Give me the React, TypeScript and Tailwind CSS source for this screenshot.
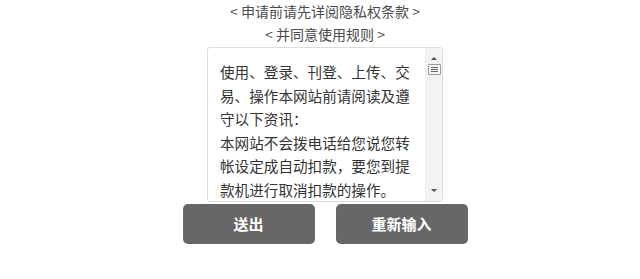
import React from 'react';

const ScrollBar: React.FC = () => (
  <div className="w-[17px] h-full bg-[#f3f3f3] border-l border-[#ececec] flex flex-col items-center">
    <div className="h-[12px] flex items-end justify-center">
      <div className="w-0 h-0 border-l-[3px] border-r-[3px] border-b-[3px] border-l-transparent border-r-transparent border-b-[#505050]" />
    </div>
    <div className="mt-[4px] w-[13px] h-[11px] bg-[#f7f7f7] border border-[#9a9a9a] rounded-[1px] flex flex-col items-center justify-center gap-[1px]">
      <div className="w-[7px] h-px bg-[#666]" />
      <div className="w-[7px] h-px bg-[#666]" />
      <div className="w-[7px] h-px bg-[#666]" />
    </div>
    <div className="flex-1" />
    <div className="h-[15px] flex items-start justify-center pt-[3px]">
      <div className="w-0 h-0 border-l-[3px] border-r-[3px] border-t-[3px] border-l-transparent border-r-transparent border-t-[#505050]" />
    </div>
  </div>
);

const App: React.FC = () => {
  return (
    <div
      className="w-full h-[279px] bg-white pl-[10px] flex flex-col items-center"
      style={{ fontFamily: '"Noto Sans CJK SC", "Liberation Sans", sans-serif' }}
    >
      <p className="text-[14px] leading-[23px] text-[#4a4a4a]">&lt; 申请前请先详阅隐私权条款 &gt;</p>
      <p className="text-[14px] leading-[23px] text-[#4a4a4a]">&lt; 并同意使用规则 &gt;</p>

      <div className="mt-[1px] w-[236px] h-[155px] bg-white border border-[#dcdcdc] rounded-[3px] flex overflow-hidden">
        <div className="flex-1 overflow-hidden pl-[12px] pr-[8px] pt-[12px] text-[14.6px] leading-[23.5px] text-[#333]">
          <p>使用、登录、刊登、上传、交易、操作本网站前请阅读及遵守以下资讯：</p>
          <p>本网站不会拨电话给您说您转帐设定成自动扣款，要您到提款机进行取消扣款的操作。</p>
        </div>
        <ScrollBar />
      </div>

      <div className="mt-[2px] flex gap-[21px]">
        <button className="w-[132px] h-[40px] rounded-[5px] bg-[#676767] text-white text-[15px] font-bold">
          送出
        </button>
        <button className="w-[132px] h-[40px] rounded-[5px] bg-[#676767] text-white text-[15px] font-bold">
          重新输入
        </button>
      </div>
    </div>
  );
};

export default App;
